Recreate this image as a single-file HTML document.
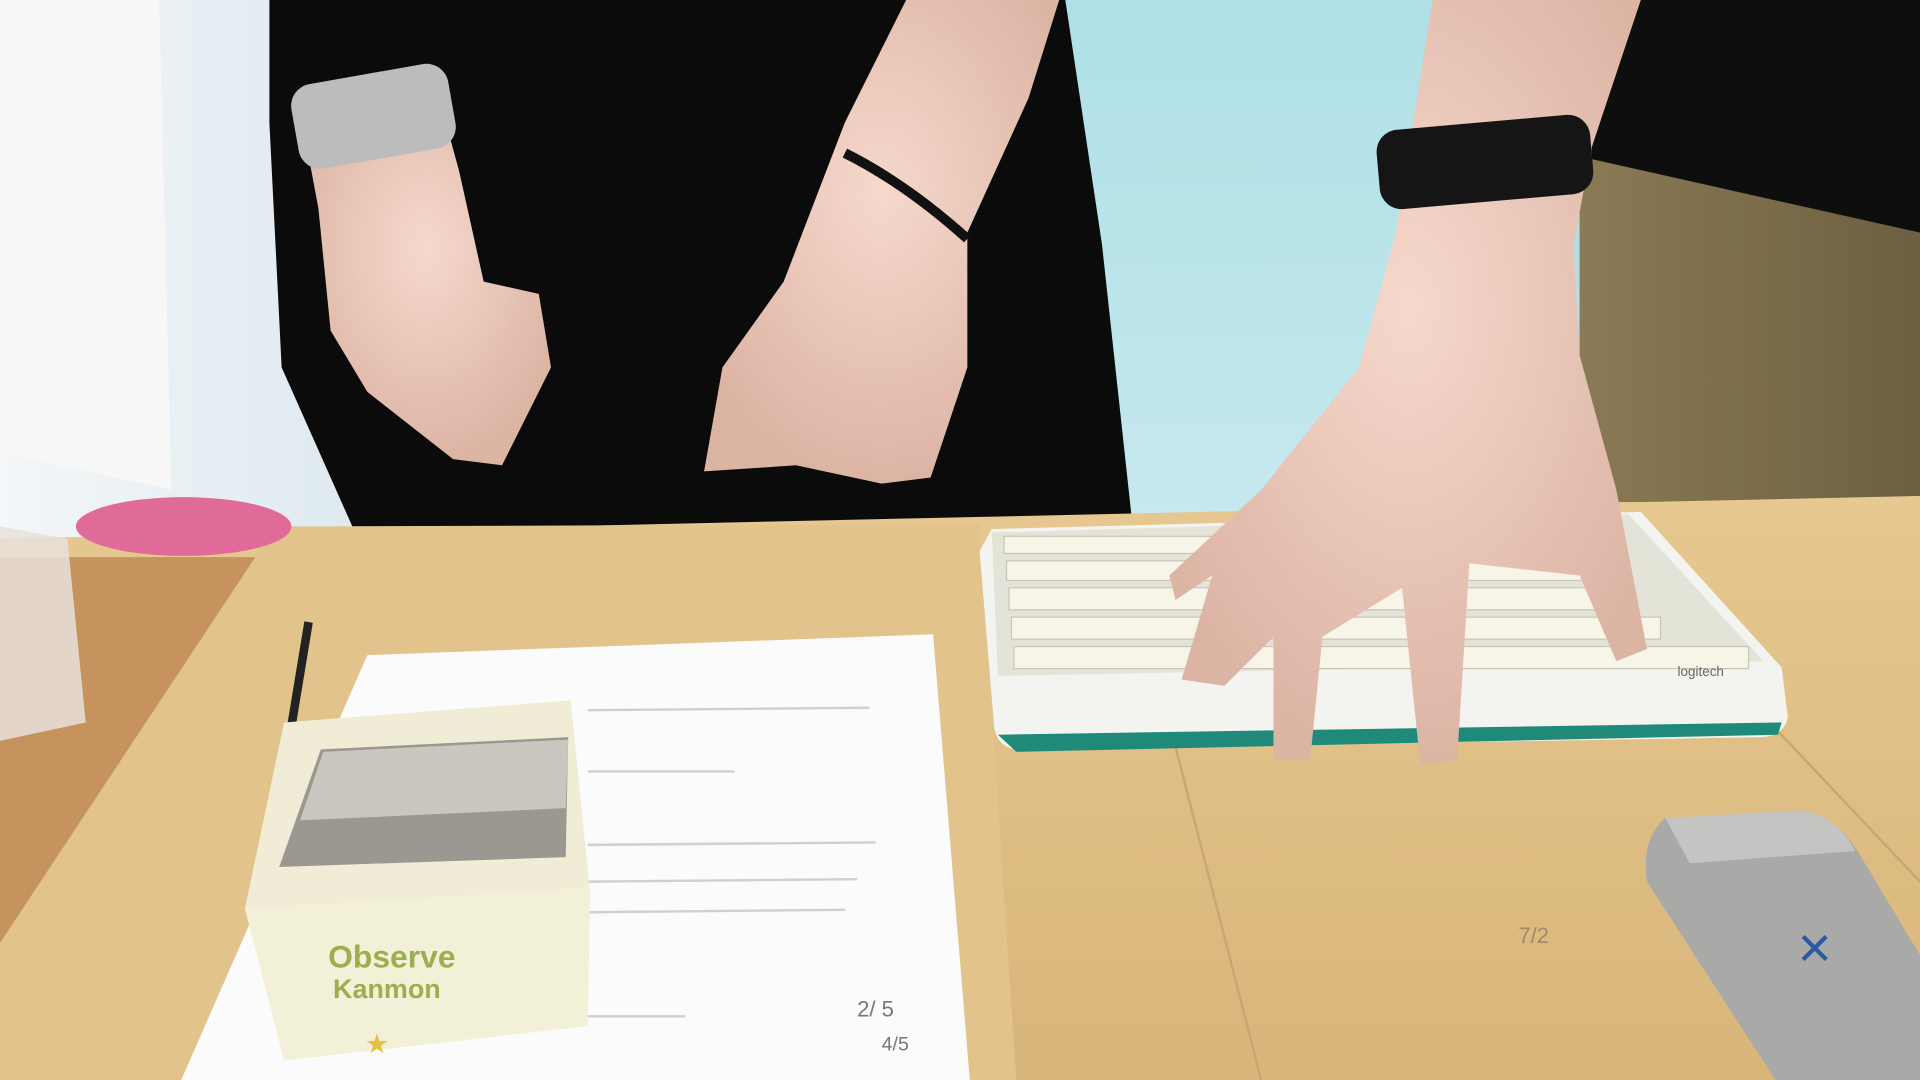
<!DOCTYPE html>
<html><head><meta charset="utf-8"><style>
html,body{margin:0;padding:0;width:1920px;height:1080px;overflow:hidden;background:#ddc08d}
svg{display:block}
</style></head><body>
<svg width="1920" height="1080" viewBox="0 0 1568 882" preserveAspectRatio="none" xmlns="http://www.w3.org/2000/svg">
<defs>
<linearGradient id="wall" x1="0" y1="0" x2="1" y2="0"><stop offset="0" stop-color="#f4f6f8"/><stop offset="1" stop-color="#dde9f0"/></linearGradient>
<linearGradient id="blue" x1="0" y1="0" x2="0" y2="1"><stop offset="0" stop-color="#aee0e6"/><stop offset="1" stop-color="#c6e9ee"/></linearGradient>
<linearGradient id="table" x1="0" y1="0" x2="0" y2="1"><stop offset="0" stop-color="#e6c890"/><stop offset="1" stop-color="#d8b57a"/></linearGradient>
<linearGradient id="pants" x1="0" y1="0" x2="1" y2="0"><stop offset="0" stop-color="#8a7a55"/><stop offset="1" stop-color="#6d5f40"/></linearGradient>
<radialGradient id="skin" cx="0.5" cy="0.4" r="0.6"><stop offset="0" stop-color="#f6d9cc"/><stop offset="1" stop-color="#dcb4a4"/></radialGradient>
</defs>
<!-- background -->
<rect x="0" y="0" width="1568" height="882" fill="url(#table)"/>
<rect x="0" y="0" width="300" height="440" fill="url(#wall)"/>
<polygon points="0,0 130,0 140,400 0,370" fill="#f7f7f7"/>
<rect x="860" y="0" width="330" height="430" fill="url(#blue)"/>
<rect x="1180" y="0" width="120" height="420" fill="#b8dde2"/>
<!-- right person -->
<rect x="1290" y="0" width="278" height="410" fill="url(#pants)"/>
<polygon points="1300,0 1568,0 1568,190 1300,130" fill="#0e0e0e"/>
<!-- left black shirt -->
<path d="M220,0 L870,0 L900,200 L925,430 L290,435 L230,300 L220,100 Z" fill="#0b0b0b"/>
<!-- table -->
<polygon points="0,440 1568,405 1568,882 0,882" fill="url(#table)"/>
<polygon points="0,455 225,455 110,650 0,770" fill="#c6925e"/>
<polygon points="225,430 800,428 830,882 0,882 0,770" fill="#e2c38c"/>
<line x1="960" y1="610" x2="1030" y2="882" stroke="#c9a772" stroke-width="2"/>
<line x1="1450" y1="595" x2="1568" y2="720" stroke="#c9a772" stroke-width="2"/>
<!-- cup and pink dish -->
<path d="M0,430 L55,440 L70,590 L0,605 Z" fill="#e8e0dc" opacity="0.85"/>
<ellipse cx="150" cy="430" rx="88" ry="24" fill="#e06a98"/>
<!-- paper -->
<polygon points="300,535 762,518 792,882 148,882" fill="#fbfbfb"/>
<g stroke="#cfcfcf" stroke-width="2">
<line x1="480" y1="580" x2="710" y2="578"/><line x1="480" y1="630" x2="600" y2="630"/>
<line x1="480" y1="690" x2="715" y2="688"/><line x1="480" y1="720" x2="700" y2="718"/>
<line x1="480" y1="745" x2="690" y2="743"/><line x1="480" y1="830" x2="560" y2="830"/>
</g>
<text x="700" y="830" font-family="Liberation Sans" font-size="18" fill="#777">2/ 5</text>
<text x="720" y="858" font-family="Liberation Sans" font-size="16" fill="#777">4/5</text>
<text x="1240" y="770" font-family="Liberation Sans" font-size="18" fill="#a08a66">7/2</text>
<!-- pen -->
<line x1="252" y1="508" x2="222" y2="690" stroke="#222" stroke-width="7"/>
<!-- box -->
<polygon points="232,590 466,572 482,730 200,742" fill="#f0ecd6"/>
<polygon points="262,612 464,602 462,700 228,708" fill="#9a9890"/>
<polygon points="264,614 464,604 462,660 245,670" fill="#c9c7c0"/>
<polygon points="200,742 482,725 480,838 232,866" fill="#f3f0d8"/>
<text x="268" y="790" font-family="Liberation Sans" font-size="26" font-weight="bold" fill="#9cae50">Observe</text>
<text x="272" y="815" font-family="Liberation Sans" font-size="22" font-weight="bold" fill="#9cae50">Kanmon</text>
<text x="298" y="860" font-size="22" fill="#e8c040">★</text>
<!-- keyboard -->
<path d="M810,432 L1340,418 L1455,545 L1460,585 Q1458,600 1440,602 L830,612 Q815,610 812,595 L800,450 Z" fill="#f3f3f0"/>
<path d="M815,600 L1455,590 L1452,600 L830,614 Z" fill="#1f8a7a"/>
<polygon points="810,435 1330,420 1440,540 815,552" fill="#e3e3d8"/>
<g fill="#f7f5e8" stroke="#c8c6b8" stroke-width="1">
<rect x="820" y="438" width="480" height="14"/>
<rect x="822" y="458" width="490" height="16"/>
<rect x="824" y="480" width="500" height="18"/>
<rect x="826" y="504" width="530" height="18"/>
<rect x="828" y="528" width="600" height="18"/>
</g>
<text x="1370" y="552" font-family="Liberation Sans" font-size="11" fill="#666">logitech</text>
<!-- grey device -->
<path d="M1360,668 L1470,662 Q1500,665 1520,700 L1568,780 L1568,882 L1450,882 L1345,720 Q1340,685 1360,668 Z" fill="#a9aaa8"/>
<path d="M1360,668 L1470,662 Q1500,665 1515,695 L1380,705 Z" fill="#c4c5c2"/>
<text x="1468" y="790" font-family="Liberation Sans" font-size="48" fill="#2a5aa0">×</text>
<!-- left arm & hand -->
<path d="M245,90 L360,85 L375,140 L395,230 L440,240 L450,300 L410,380 L370,375 L300,320 L270,270 L260,170 Z" fill="url(#skin)"/>
<rect x="240" y="60" width="130" height="70" rx="18" fill="#bcbcbc" transform="rotate(-10 305 95)"/>
<!-- middle arm & hand -->
<path d="M690,100 L740,0 L865,0 L840,80 L790,190 L790,300 L760,390 L720,395 L650,380 L575,385 L590,300 L640,230 Z" fill="url(#skin)"/>
<path d="M690,125 Q740,150 790,195" stroke="#111" stroke-width="8" fill="none"/>
<!-- right arm & hand -->
<path d="M1170,0 L1340,0 L1300,120 L1285,200 L1290,290 L1320,400 L1345,530 L1320,540 L1290,470 L1200,460 L1190,620 L1160,625 L1145,480 L1080,520 L1070,620 L1040,620 L1040,520 L1000,560 L965,555 L990,470 L960,490 L955,470 L1030,400 L1110,300 L1140,190 Z" fill="url(#skin)"/>
<rect x="1125" y="100" width="175" height="65" rx="18" fill="#151515" transform="rotate(-5 1210 130)"/>
</svg>
</body></html>
